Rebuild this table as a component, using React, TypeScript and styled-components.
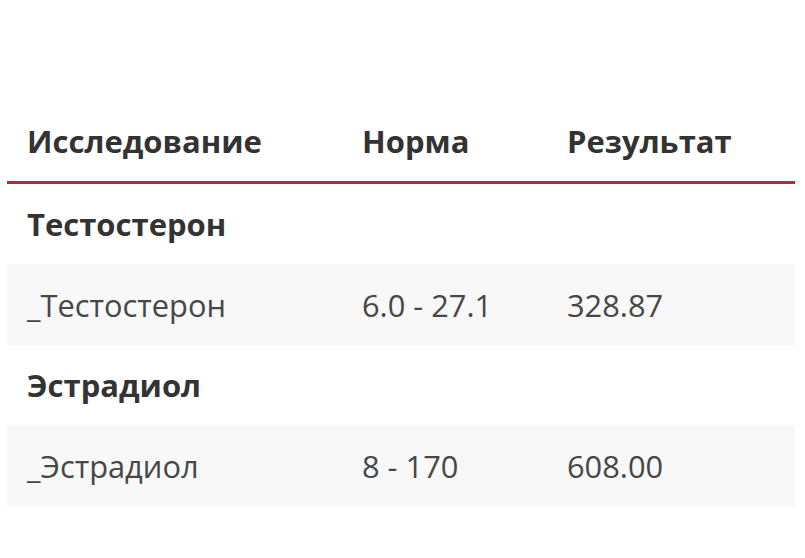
import React from 'react'
import styled, { createGlobalStyle } from 'styled-components'

const GlobalStyle = createGlobalStyle`
  html, body {
    margin: 0;
    padding: 0;
    background: #fff;
  }
  body {
    font-family: "Open Sans", "Noto Sans", sans-serif;
    color: #3a3a3a;
  }
`

const Page = styled.div`
  width: 805px;
  height: 558px;
  padding: 100px 10px 0 7px;
  box-sizing: border-box;
`

const Table = styled.div`
  width: 788px;
  display: flex;
  flex-direction: column;
`

const Row = styled.div<{ $kind: 'head' | 'group' | 'item' }>`
  display: grid;
  grid-template-columns: 335px 205px 1fr;
  align-items: center;
  height: ${(p) => (p.$kind === 'head' ? 81 : p.$kind === 'group' ? 80 : 81)}px;
  background: ${(p) => (p.$kind === 'item' ? '#f8f8f8' : 'transparent')};
  border-bottom: ${(p) => (p.$kind === 'head' ? '3px solid #ab2f37' : 'none')};
`

const Cell = styled.div<{ $bold?: boolean }>`
  padding-left: 20px;
  font-size: ${(p) => (p.$bold ? 31 : 30.8)}px;
  font-weight: ${(p) => (p.$bold ? 700 : 400)};
  color: ${(p) => (p.$bold ? '#333' : '#474747')};
  white-space: nowrap;
`

const sections = [
  { title: 'Тестостерон', name: '_Тестостерон', norm: '6.0 - 27.1', result: '328.87' },
  { title: 'Эстрадиол', name: '_Эстрадиол', norm: '8 - 170', result: '608.00' },
]

export default function App() {
  return (
    <Page>
      <GlobalStyle />
      <Table>
        <Row $kind="head">
          <Cell $bold>Исследование</Cell>
          <Cell $bold>Норма</Cell>
          <Cell $bold>Результат</Cell>
        </Row>
        {sections.map((s) => (
          <React.Fragment key={s.title}>
            <Row $kind="group">
              <Cell $bold>{s.title}</Cell>
            </Row>
            <Row $kind="item">
              <Cell>{s.name}</Cell>
              <Cell>{s.norm}</Cell>
              <Cell>{s.result}</Cell>
            </Row>
          </React.Fragment>
        ))}
      </Table>
    </Page>
  )
}
